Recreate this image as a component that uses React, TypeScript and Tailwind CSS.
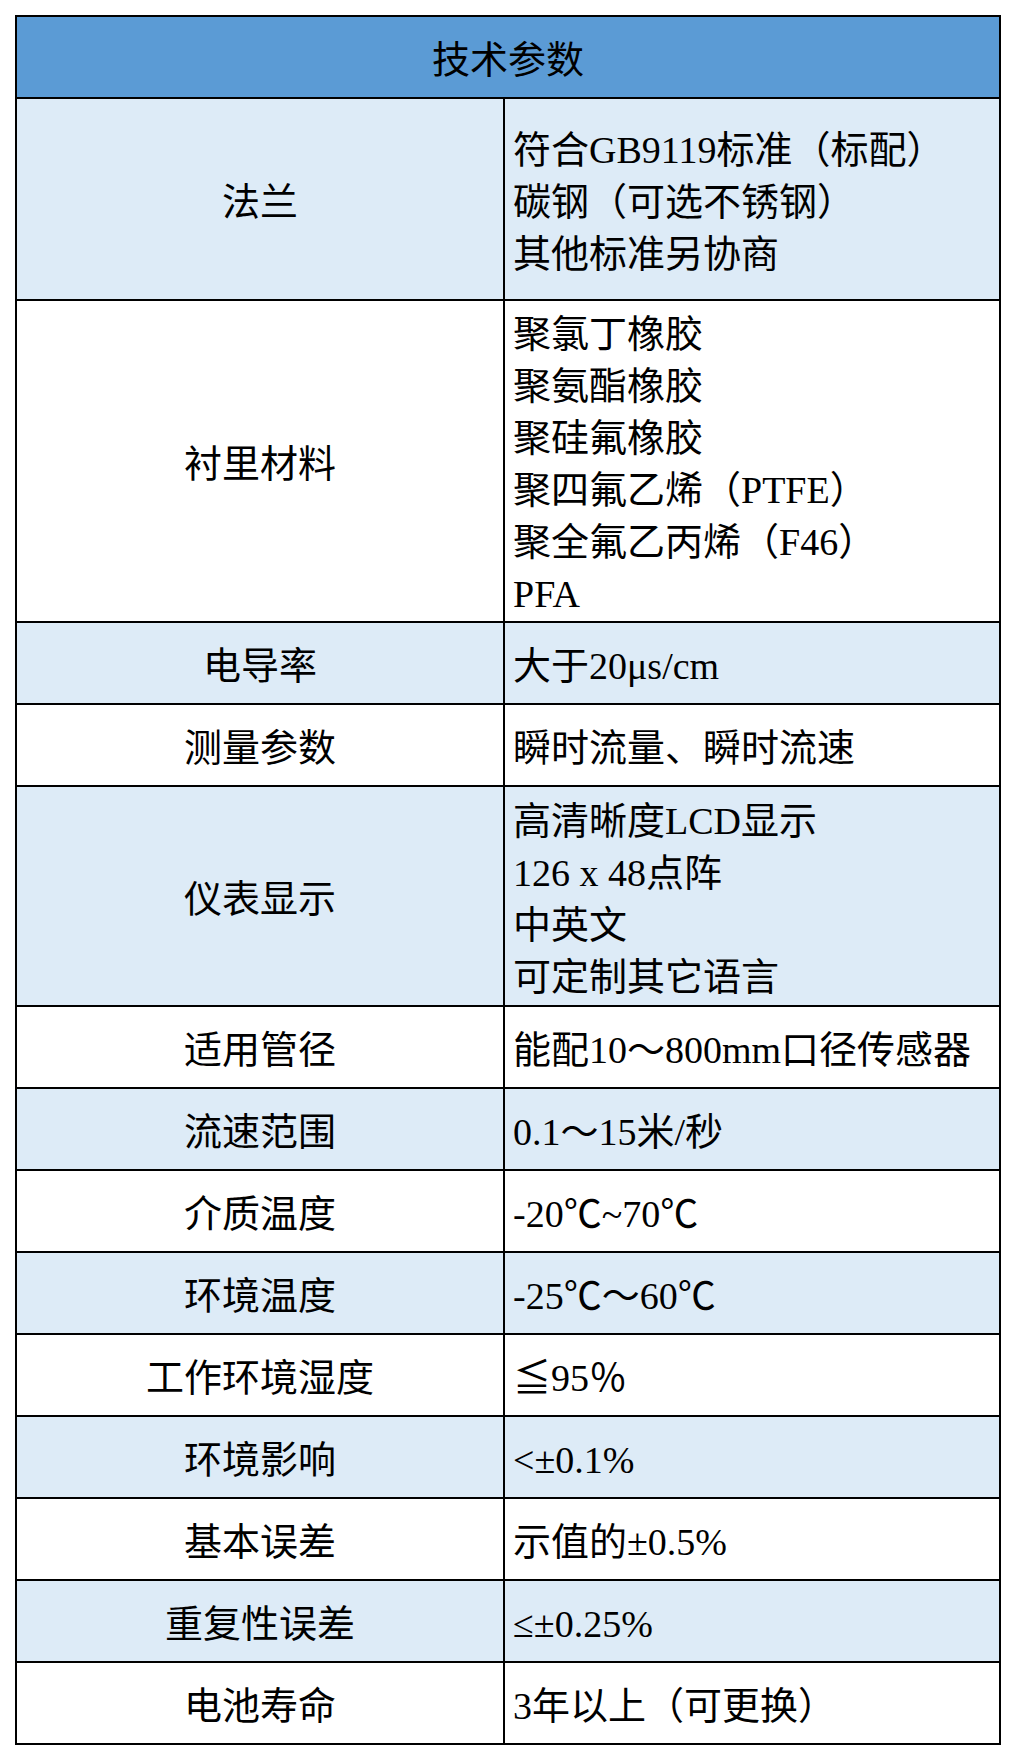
const rows: { label: string; lines: string[]; h: string; shaded: boolean }[] = [
  { label: "法兰", lines: ["符合GB9119标准（标配）", "碳钢（可选不锈钢）", "其他标准另协商"], h: "h-[202px]", shaded: true },
  {
    label: "衬里材料",
    lines: ["聚氯丁橡胶", "聚氨酯橡胶", "聚硅氟橡胶", "聚四氟乙烯（PTFE）", "聚全氟乙丙烯（F46）", "PFA"],
    h: "h-[322px]",
    shaded: false,
  },
  { label: "电导率", lines: ["大于20μs/cm"], h: "h-[82px]", shaded: true },
  { label: "测量参数", lines: ["瞬时流量、瞬时流速"], h: "h-[82px]", shaded: false },
  { label: "仪表显示", lines: ["高清晰度LCD显示", "126 x 48点阵", "中英文", "可定制其它语言"], h: "h-[220px]", shaded: true },
  { label: "适用管径", lines: ["能配10～800mm口径传感器"], h: "h-[82px]", shaded: false },
  { label: "流速范围", lines: ["0.1～15米/秒"], h: "h-[82px]", shaded: true },
  { label: "介质温度", lines: ["-20℃~70℃"], h: "h-[82px]", shaded: false },
  { label: "环境温度", lines: ["-25℃～60℃"], h: "h-[82px]", shaded: true },
  { label: "工作环境湿度", lines: ["≦95％"], h: "h-[82px]", shaded: false },
  { label: "环境影响", lines: ["<±0.1%"], h: "h-[82px]", shaded: true },
  { label: "基本误差", lines: ["示值的±0.5%"], h: "h-[82px]", shaded: false },
  { label: "重复性误差", lines: ["≤±0.25%"], h: "h-[82px]", shaded: true },
  { label: "电池寿命", lines: ["3年以上（可更换）"], h: "h-[82px]", shaded: false },
];

export default function App() {
  return (
    <div className="w-[1016px] h-[1760px] bg-white pt-[15px] pl-[15px] font-['Liberation_Serif','Noto_Sans_CJK_SC',serif] text-black">
      <div className="w-[986px] border-2 border-black">
        {/* header */}
        <div className="h-[80px] bg-[#5b9bd5] flex items-center justify-center pt-[5px] text-[38px] leading-none">
          技术参数
        </div>
        {rows.map((r) => (
          <div
            key={r.label}
            className={`${r.h} border-t-2 border-black grid grid-cols-[486px_1fr] ${r.shaded ? "bg-[#ddebf7]" : "bg-white"}`}
          >
            <div className="flex items-center justify-center pt-[6px] text-[38px] leading-none">{r.label}</div>
            <div className="border-l-2 border-black flex flex-col justify-center pl-[8px] pt-[6px] text-[38px] leading-[52px] whitespace-pre">
              {r.lines.map((l) => (
                <div key={l}>{l}</div>
              ))}
            </div>
          </div>
        ))}
      </div>
    </div>
  );
}
